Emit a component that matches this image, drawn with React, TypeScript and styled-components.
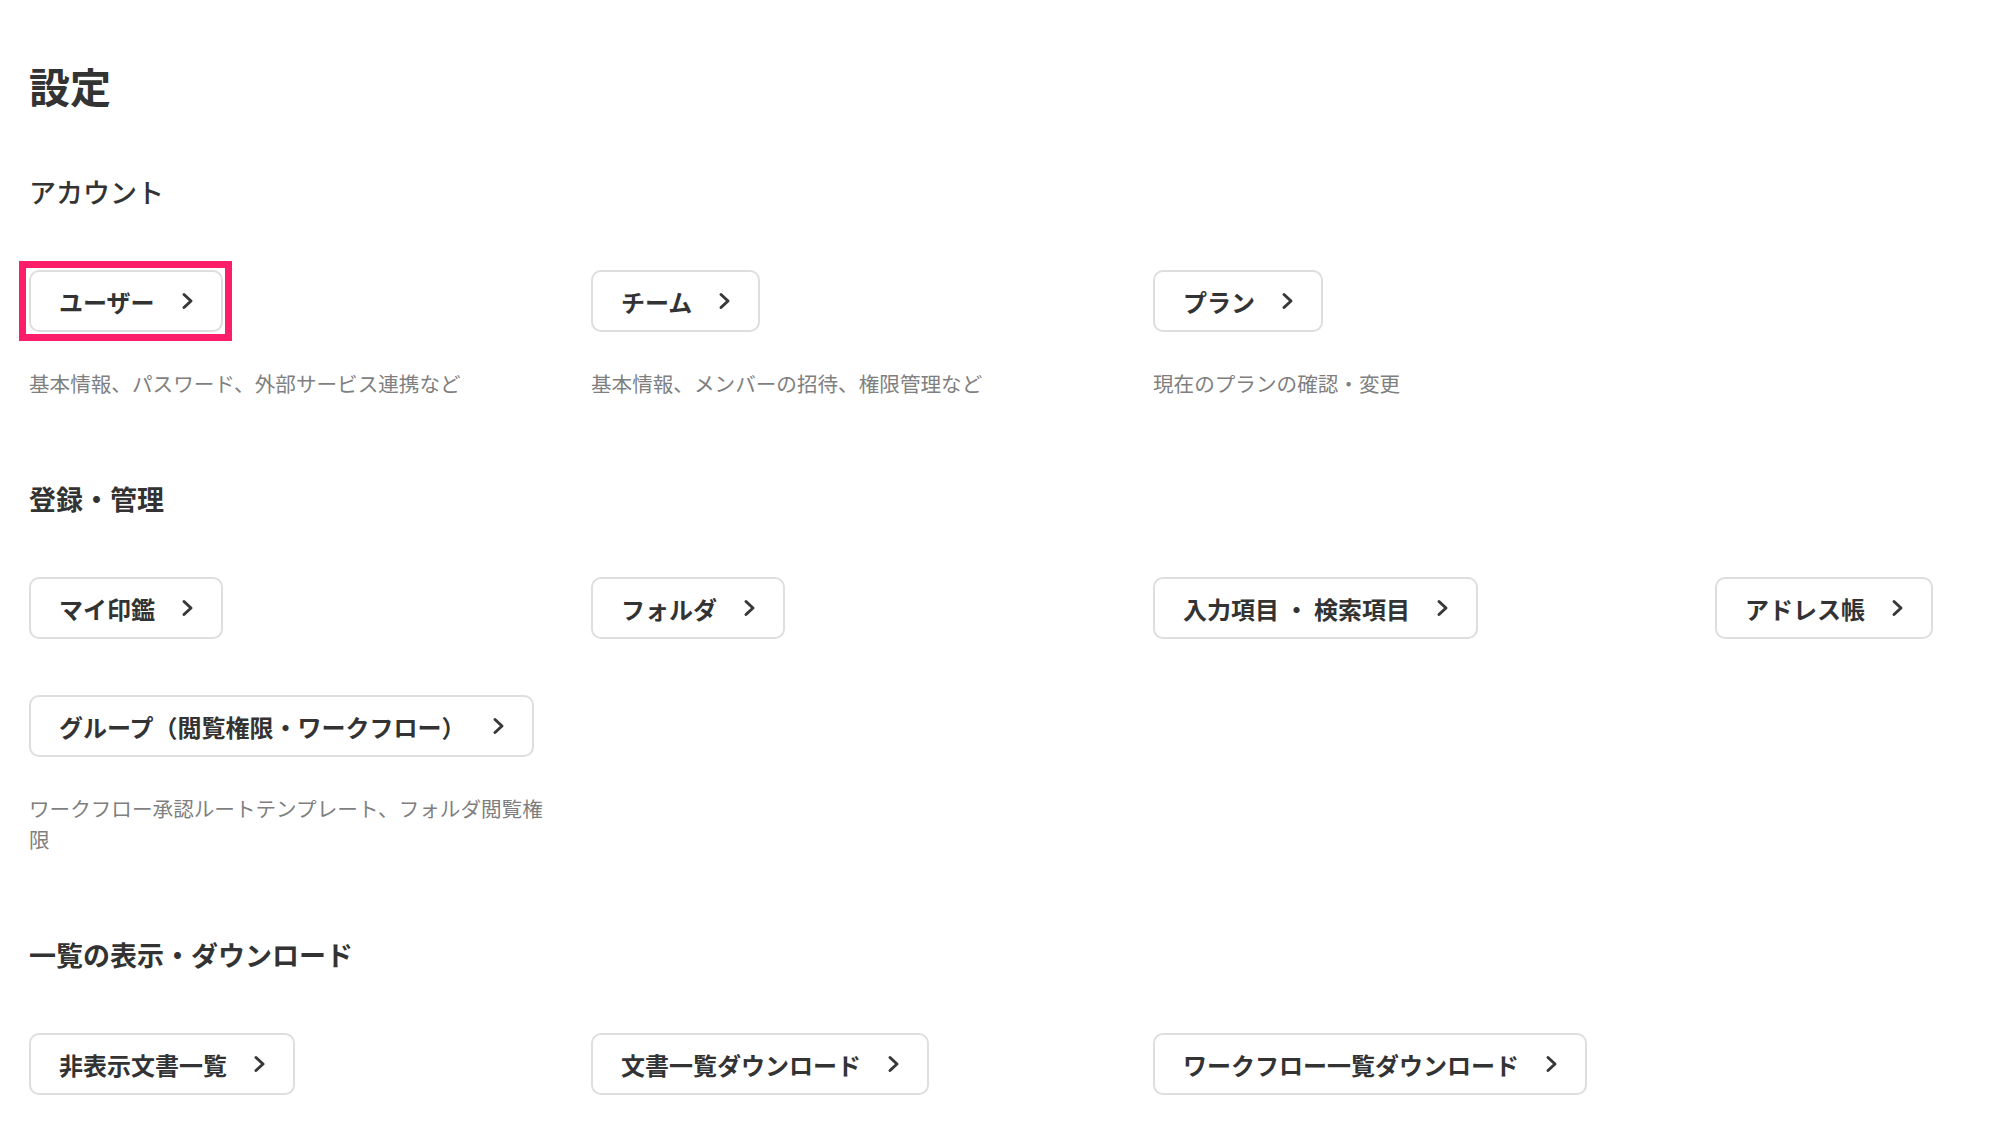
import React from 'react';
import styled, { createGlobalStyle, css } from 'styled-components';

interface Setting {
  label: string;
  description?: string;
  highlighted?: boolean;
}

interface Group {
  title: string;
  light?: boolean;
  items: Setting[];
}

const groups: Group[] = [
  {
    title: 'アカウント',
    light: true,
    items: [
      { label: 'ユーザー', description: '基本情報、パスワード、外部サービス連携など', highlighted: true },
      { label: 'チーム', description: '基本情報、メンバーの招待、権限管理など' },
      { label: 'プラン', description: '現在のプランの確認・変更' },
    ],
  },
  {
    title: '登録・管理',
    items: [
      { label: 'マイ印鑑' },
      { label: 'フォルダ' },
      { label: '入力項目 ・ 検索項目' },
      { label: 'アドレス帳' },
      {
        label: 'グループ（閲覧権限・ワークフロー）',
        description: 'ワークフロー承認ルートテンプレート、フォルダ閲覧権限',
      },
    ],
  },
  {
    title: '一覧の表示・ダウンロード',
    items: [{ label: '非表示文書一覧' }, { label: '文書一覧ダウンロード' }, { label: 'ワークフロー一覧ダウンロード' }],
  },
];

const Chevron = () => (
  <svg width="13" height="18" viewBox="0 0 13 18" fill="none">
    <polyline points="3,2.5 10,9 3,15.5" stroke="#383838" strokeWidth="3" strokeLinecap="round" strokeLinejoin="round" />
  </svg>
);

const App: React.FC = () => {
  return (
    <>
      <GlobalStyle />
      <Page>
        <Title>設定</Title>
        {groups.map((g) => (
          <Section key={g.title}>
            <SectionTitle $light={g.light}>{g.title}</SectionTitle>
            <Grid>
              {g.items.map((item) => (
                <Item key={item.label}>
                  <LinkButton $highlighted={item.highlighted}>
                    <span>{item.label}</span>
                    <Chevron />
                  </LinkButton>
                  {item.description && <Description>{item.description}</Description>}
                </Item>
              ))}
            </Grid>
          </Section>
        ))}
      </Page>
    </>
  );
};

export default App;

const GlobalStyle = createGlobalStyle`
  * {
    box-sizing: border-box;
  }
  body {
    margin: 0;
    background: #ffffff;
    overflow: hidden;
    font-family: "Noto Sans CJK JP", "Noto Sans", sans-serif;
    color: #333333;
  }
`;

const Page = styled.main`
  width: 1998px;
  height: 1129px;
  padding: 55px 0 0 29px;
  overflow: hidden;
`;

const Title = styled.h1`
  margin: 0;
  font-size: 41px;
  line-height: 60px;
  font-weight: 700;
  color: #333333;
`;

const Section = styled.section`
  margin-top: 80px;
  &:first-of-type {
    margin-top: 57px;
  }
`;

const SectionTitle = styled.h2<{ $light?: boolean }>`
  margin: 0 0 58px;
  font-size: 27px;
  line-height: 40px;
  font-weight: ${(p) => (p.$light ? 500 : 700)};
  color: #333333;
`;

const Grid = styled.div`
  display: grid;
  grid-template-columns: repeat(4, 530px);
  column-gap: 32px;
  row-gap: 56px;
  align-items: start;
`;

const Item = styled.div`
  display: flex;
  flex-direction: column;
  align-items: flex-start;
`;

const LinkButton = styled.button<{ $highlighted?: boolean }>`
  position: relative;
  display: inline-flex;
  align-items: center;
  gap: 26px;
  height: 62px;
  padding: 0 27px 0 28px;
  background: #ffffff;
  border: 2px solid #dedede;
  border-radius: 10px;
  font-family: inherit;
  font-size: 24px;
  font-weight: 700;
  color: #333333;
  cursor: pointer;
  white-space: nowrap;
  & svg {
    flex-shrink: 0;
  }
  ${(p) =>
    p.$highlighted &&
    css`
      &::after {
        content: '';
        position: absolute;
        top: -11px;
        left: -12px;
        right: -11px;
        bottom: -11px;
        border: 7px solid #fd1d68;
        pointer-events: none;
      }
    `}
`;

const Description = styled.p`
  margin: 36px 0 0;
  font-size: 20.6px;
  line-height: 31px;
  color: #7f7f7f;
`;
